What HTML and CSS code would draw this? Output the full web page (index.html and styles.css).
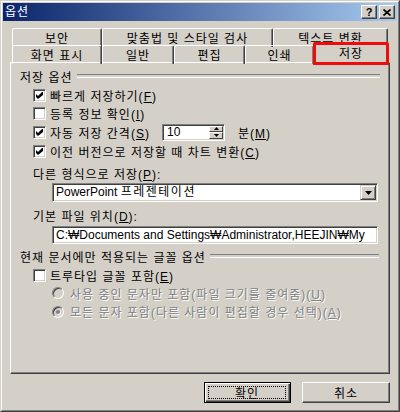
FILE: index.html
```html
<!DOCTYPE html>
<html lang="ko">
<head>
<meta charset="utf-8">
<title>옵션</title>
<link rel="stylesheet" href="styles.css">
</head>
<body>
<div class="window">
  <div class="frame">
    <div class="titlebar">
      <span class="title">옵션</span>
      <div class="tbtns">
        <span class="tbtn help">?</span>
        <span class="tbtn"><svg width="8" height="7" viewBox="0 0 8 7"><path d="M0.5 0.5 L7.5 6.5 M7.5 0.5 L0.5 6.5" stroke="#000" stroke-width="1.7" fill="none"/></svg></span>
      </div>
    </div>
    <div class="content">
      <div class="tabs">
        <div class="tabrow r1">
          <div class="tab">보안</div>
          <div class="tab">맞춤법 및 스타일 검사</div>
          <div class="tab">텍스트 변환</div>
        </div>
        <div class="tabrow r2">
          <div class="tab">화면 표시</div>
          <div class="tab">일반</div>
          <div class="tab">편집</div>
          <div class="tab">인쇄</div>
          <div class="tab sel">저장</div>
        </div>
      </div>
      <div class="panel">
        <div class="group-title">저장 옵션</div>
        <div class="opts">
          <div class="opt"><span class="cb"><svg width="7" height="7" viewBox="0 0 7 7"><path d="M0 2 L2 4 L6 0 L7 0 L7 3 L2 7 L0 5 Z" fill="#000"/></svg></span><span>빠르게 저장하기(<u>F</u>)</span></div>
          <div class="opt"><span class="cb"></span><span>등록 정보 확인(<u>I</u>)</span></div>
          <div class="opt tall"><span class="cb"><svg width="7" height="7" viewBox="0 0 7 7"><path d="M0 2 L2 4 L6 0 L7 0 L7 3 L2 7 L0 5 Z" fill="#000"/></svg></span><span class="spin-label">자동 저장 간격(<u>S</u>)</span>
            <span class="spin"><span class="spin-val">10</span><span class="spin-btns"><span class="spin-btn"><svg width="5" height="3" viewBox="0 0 5 3"><path d="M2.5 0 L5 3 L0 3 Z" fill="#000"/></svg></span><span class="spin-btn"><svg width="5" height="3" viewBox="0 0 5 3"><path d="M0 0 L5 0 L2.5 3 Z" fill="#000"/></svg></span></span></span>
            <span class="unit">분(<u>M</u>)</span></div>
          <div class="opt"><span class="cb"><svg width="7" height="7" viewBox="0 0 7 7"><path d="M0 2 L2 4 L6 0 L7 0 L7 3 L2 7 L0 5 Z" fill="#000"/></svg></span><span>이전 버전으로 저장할 때 차트 변환(<u>C</u>)</span></div>
        </div>
        <div class="field-label">다른 형식으로 저장(<u>P</u>):</div>
        <div class="combo"><span class="combo-text">PowerPoint <span class="ko">프레젠테이션</span></span><span class="combo-btn"><svg width="7" height="4" viewBox="0 0 7 4"><path d="M0 0 L7 0 L3.5 4 Z" fill="#000"/></svg></span></div>
        <div class="field-label second">기본 파일 위치(<u>D</u>):</div>
        <div class="textbox">C:₩Documents and Settings₩Administrator,HEEJIN₩My</div>
        <div class="group-title second">현재 문서에만 적용되는 글꼴 옵션</div>
        <div class="opts">
          <div class="opt"><span class="cb"></span><span>트루타입 글꼴 포함(<u>E</u>)</span></div>
          <div class="opt radio-row disabled"><span class="radio"></span><span>사용 중인 문자만 포함(파일 크기를 줄여줌)(<u>U</u>)</span></div>
          <div class="opt radio-row disabled last"><span class="radio on"></span><span>모든 문자 포함(다른 사람이 편집할 경우 선택)(<u>A</u>)</span></div>
        </div>
      </div>
      <div class="buttons">
        <div class="btn default"><span class="focus">확인</span></div>
        <div class="btn">취소</div>
      </div>
    </div>
  </div>
</div>
</body>
</html>
```
FILE: styles.css
```css
* { box-sizing: border-box; }
html, body { margin: 0; padding: 0; }
body {
  width: 400px;
  height: 412px;
  overflow: hidden;
  background: #d4d0c8;
  font-family: "Liberation Sans", "Noto Sans CJK KR", sans-serif;
  font-size: 12px;
  letter-spacing: 1px;
  color: #000;
}
u { text-decoration: underline; text-underline-offset: 1px; }

.window {
  width: 400px;
  height: 412px;
  background: #d4d0c8;
  border: 1px solid;
  border-color: #d4d0c8 #404040 #404040 #d4d0c8;
}
.frame {
  height: 100%;
  border: 1px solid;
  border-color: #fff #808080 #808080 #fff;
  padding: 1px;
}

.titlebar {
  height: 18px;
  display: flex;
  align-items: center;
  justify-content: space-between;
  padding: 0 2px 0 2px;
  background: linear-gradient(to right, #0a246a, #a6caf0);
  color: #fff;
}
.title { line-height: 18px; }
.tbtns { display: flex; gap: 2px; }
.tbtn {
  width: 16px;
  height: 14px;
  display: flex;
  align-items: center;
  justify-content: center;
  background: #d4d0c8;
  border: 1px solid;
  border-color: #fff #404040 #404040 #fff;
  box-shadow: inset -1px -1px #808080;
  color: #000;
}
.tbtn.help {
  font-family: "Liberation Sans", sans-serif;
  font-weight: bold;
  font-size: 11px;
  line-height: 12px;
  letter-spacing: 0;
}

.content { padding: 7px 7px 0 7px; }

.tabs { margin: 0 2px; }
.tabrow { display: grid; height: 17px; }
.r1 { grid-template-columns: 90px 171px 115px; }
.r2 { grid-template-columns: 90px 72px 71px 69px 74px; }
.tab {
  display: flex;
  align-items: center;
  justify-content: center;
  white-space: nowrap;
  border-top: 1px solid #fff;
  border-left: 1px solid #fff;
  border-right: 1px solid #404040;
  box-shadow: inset -1px 0 #808080;
  border-radius: 2px 2px 0 0;
  padding-bottom: 1px;
}
.tab.sel {
  margin: -3px -1px -1px -1px;
  border: none;
  box-shadow: none;
  background: #d4d0c8;
  outline: 3px solid #ee0c0c;
  outline-offset: -3px;
  z-index: 1;
  padding-bottom: 2px;
}

.panel {
  height: 312px;
  border: 1px solid;
  border-color: #fff #404040 #404040 #fff;
  box-shadow: inset -1px -1px #808080;
  padding: 6px 9px 0 9px;
}

.group-title {
  display: flex;
  align-items: center;
  height: 14px;
  white-space: nowrap;
}
.group-title::after {
  content: "";
  flex: 1;
  height: 2px;
  margin-left: 4px;
  border-top: 1px solid #808080;
  border-bottom: 1px solid #fff;
}
.group-title.second { margin-top: 5px; margin-right: 1px; }

.opts { margin-top: 3px; }
.opt {
  display: flex;
  align-items: center;
  gap: 4px;
  height: 18px;
  margin-left: 13px;
  white-space: nowrap;
}
.opt.tall { height: 20px; }
.opt.last { height: 19px; }

.cb {
  width: 13px;
  height: 13px;
  flex: none;
  display: flex;
  align-items: center;
  justify-content: center;
  background: #fff;
  border: 1px solid;
  border-color: #808080 #fff #fff #808080;
  box-shadow: inset 1px 1px #404040, inset -1px -1px #d4d0c8;
}

.spin-label { width: 108px; }
.spin {
  width: 63px;
  height: 17px;
  display: flex;
  background: #fff;
  border: 1px solid;
  border-color: #808080 #fff #fff #808080;
  box-shadow: inset 1px 1px #404040, inset -1px -1px #d4d0c8;
  padding: 1px 1px 1px 1px;
  letter-spacing: 0;
}
.spin-val { flex: 1; padding-left: 3px; line-height: 13px; }
.spin-btns { width: 14px; display: flex; flex-direction: column; }
.spin-btn {
  flex: 1;
  display: flex;
  align-items: center;
  justify-content: center;
  background: #d4d0c8;
  border: 1px solid;
  border-color: #fff #404040 #404040 #fff;
}
.unit { margin-left: 9px; }

.field-label {
  height: 14px;
  line-height: 14px;
  margin: 8px 0 0 13px;
  white-space: nowrap;
}
.field-label.second { margin-top: 8px; }

.combo {
  height: 19px;
  margin: 1px 2px 0 32px;
  display: flex;
  background: #fff;
  border: 1px solid;
  border-color: #808080 #fff #fff #808080;
  box-shadow: inset 1px 1px #404040, inset -1px -1px #d4d0c8;
  padding: 1px;
}
.combo-text {
  flex: 1;
  padding-left: 2px;
  line-height: 15px;
  white-space: nowrap;
  overflow: hidden;
  letter-spacing: 0;
}
.combo-text .ko { letter-spacing: 1.5px; }
.combo-btn {
  width: 16px;
  display: flex;
  align-items: center;
  justify-content: center;
  background: #d4d0c8;
  border: 1px solid;
  border-color: #d4d0c8 #404040 #404040 #d4d0c8;
  box-shadow: inset 1px 1px #fff, inset -1px -1px #808080;
}

.textbox {
  height: 18px;
  margin: 2px 2px 0 32px;
  background: #fff;
  border: 1px solid;
  border-color: #808080 #fff #fff #808080;
  box-shadow: inset 1px 1px #404040, inset -1px -1px #d4d0c8;
  padding: 1px 1px 1px 3px;
  line-height: 14px;
  white-space: nowrap;
  overflow: hidden;
  letter-spacing: 0;
}

.radio-row { margin-left: 32px; gap: 6px; }
.disabled { color: #808080; text-shadow: 1px 1px 0 #fff; }
.radio {
  width: 12px;
  height: 12px;
  flex: none;
  border-radius: 50%;
  background: #d4d0c8;
  border: 1px solid;
  border-color: #808080 #fff #fff #808080;
  box-shadow: inset 1px 1px #404040, inset -1px -1px #d4d0c8;
  display: flex;
  align-items: center;
  justify-content: center;
}
.radio.on::after {
  content: "";
  width: 4px;
  height: 4px;
  border-radius: 50%;
  background: #808080;
  box-shadow: 1px 1px 0 #fff;
}

.buttons {
  display: flex;
  justify-content: flex-end;
  gap: 11px;
  margin-top: 8px;
}
.btn {
  width: 88px;
  height: 21px;
  display: flex;
  align-items: center;
  justify-content: center;
  background: #d4d0c8;
  border: 1px solid;
  border-color: #fff #404040 #404040 #fff;
  box-shadow: inset -1px -1px #808080;
}
.btn.default {
  width: 87px;
  border-color: #000;
  box-shadow: inset 1px 1px #fff, inset -1px -1px #404040, inset -2px -2px #808080;
  padding: 3px 4px 3px 3px;
}
.focus {
  flex: 1;
  align-self: stretch;
  display: flex;
  align-items: center;
  justify-content: center;
  border: 1px dotted #000;
}
```
